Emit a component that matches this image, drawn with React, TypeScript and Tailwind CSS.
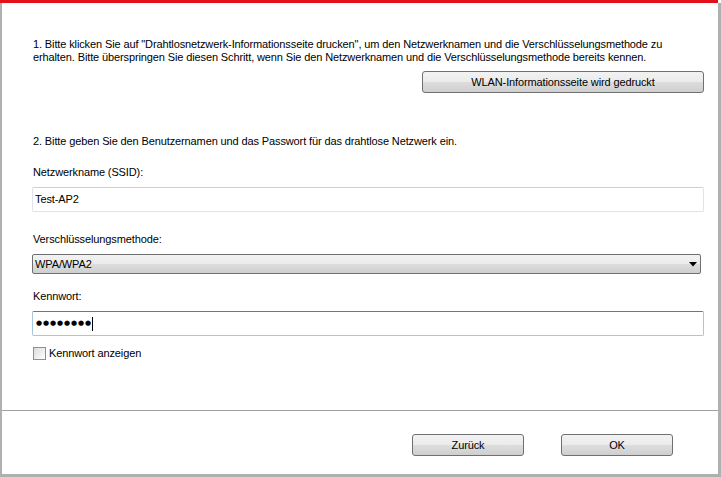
const btn =
  "rounded-[3px] border border-[#707070] bg-[linear-gradient(#f2f2f2_0%,#ebebeb_50%,#dddddd_51%,#cfcfcf_100%)] text-black leading-none flex items-center justify-center";

function Feld({ children, className }: { children: React.ReactNode; className: string }) {
  return <div className={"h-[25px] flex items-center pl-[2px] " + className}>{children}</div>;
}

export default function App() {
  return (
    <div
      className="w-[721px] h-[477px] bg-white flex flex-col text-black text-[11px] tracking-[-0.12px] leading-[13px] whitespace-nowrap"
      style={{ fontFamily: '"Liberation Sans", Arial, sans-serif' }}
    >
      <div className="h-[3px] bg-[#e3101c] mr-[3px]" />
      <div className="flex flex-1">
        <div className="w-[2px] bg-[#b0b0b0]" />
        <div className="flex-1 flex flex-col">
          <div className="flex flex-col pl-[30px] pr-[14px] flex-1">
            <p className="mt-[35px] pl-[1px]">
              1. Bitte klicken Sie auf "Drahtlosnetzwerk-Informationsseite drucken", um den Netzwerknamen und die Verschlüsselungsmethode zu
              <br />
              erhalten. Bitte überspringen Sie diesen Schritt, wenn Sie den Netzwerknamen und die Verschlüsselungsmethode bereits kennen.
            </p>
            <div className="flex justify-end mt-[7px]">
              <button className={btn + " w-[282px] h-[22px]"}>WLAN-Informationsseite wird gedruckt</button>
            </div>

            <p className="mt-[42px] pl-[1px]">
              2. Bitte geben Sie den Benutzernamen und das Passwort für das drahtlose Netzwerk ein.
            </p>

            <label className="mt-[18px] pl-[1px]">Netzwerkname (SSID):</label>
            <Feld className="mt-[8px] border border-[#e2e3ea] border-t-[#cfd0d6] rounded-[2px]">Test-AP2</Feld>

            <label className="mt-[21px] pl-[1px]">Verschlüsselungsmethode:</label>
            <div className="mt-[8px] mr-[3px] h-[20px] rounded-[2px] border border-[#707070] bg-[linear-gradient(#f2f2f2_0%,#ebebeb_50%,#dddddd_51%,#cfcfcf_100%)] flex items-center justify-between pl-[2px] pr-[3px]">
              <span>WPA/WPA2</span>
              <svg width="8" height="5" viewBox="0 0 8 5">
                <path d="M0 0H8L4 4.5Z" fill="#000" />
              </svg>
            </div>

            <label className="mt-[16px] pl-[1px]">Kennwort:</label>
            <Feld className="mt-[8px] border border-[#a9c6dc] border-t-[#5a7d94] rounded-[2px] pl-[3px]">
              <span className="text-[7px] tracking-[0.9px] leading-none" style={{ fontFamily: '"DejaVu Sans", sans-serif' }}>
                ●●●●●●●●
              </span>
              <span className="w-px h-[14px] bg-black" />
            </Feld>

            <label className="mt-[11px] flex items-center gap-[3px] pl-[1px]">
              <span className="w-[13px] h-[13px] border border-[#8e8f8f] bg-[linear-gradient(135deg,#dcdcdc,#ffffff)] inline-block" />
              Kennwort anzeigen
            </label>
          </div>

          <div className="h-px bg-[#a0a0a0]" />
          <div className="h-[63px] flex items-start pt-[23px] pl-[410px] gap-[37px]">
            <button className={btn + " w-[112px] h-[22px]"}>Zurück</button>
            <button className={btn + " w-[112px] h-[22px]"}>OK</button>
          </div>
        </div>
        <div className="w-[3px] bg-[#b0b0b0]" />
      </div>
      <div className="h-[3px] bg-[#b0b0b0]" />
    </div>
  );
}
